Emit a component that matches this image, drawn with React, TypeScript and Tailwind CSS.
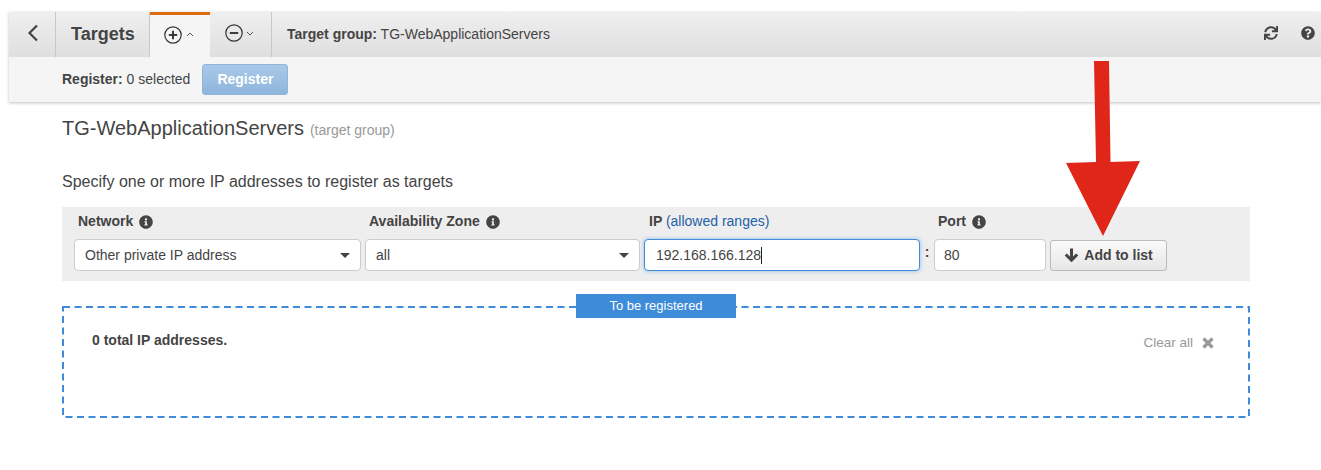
import { FaInfoCircle, FaQuestionCircle, FaSync } from 'react-icons/fa';

function Tab({ className, children }: { className: string; children: React.ReactNode }) {
  return <div className={`flex h-full items-center border-r border-[#c8c8c8] ${className}`}>{children}</div>;
}

function CircleGlyph({ plus }: { plus?: boolean }) {
  return (
    <svg width="18" height="18" viewBox="0 0 18 18" fill="none" stroke="#333" strokeWidth="1.2">
      <circle cx="9" cy="9" r="8.2" />
      <path d="M4.8 9h8.4" strokeWidth="1.9" />
      {plus && <path d="M9 4.8v8.4" strokeWidth="1.9" />}
    </svg>
  );
}

function SelectBox({ label, className }: { label: string; className: string }) {
  return (
    <div className={`flex h-[32px] items-center justify-between rounded-[4px] border border-[#ccc] bg-white pl-[10px] pr-[10px] ${className}`}>
      <span>{label}</span>
      <span className="h-0 w-0 border-x-[5px] border-t-[5px] border-x-transparent border-t-[#444]" />
    </div>
  );
}

export default function App() {
  return (
    <div className="relative h-[470px] w-[1321px] overflow-hidden bg-white font-['Liberation_Sans',Arial,sans-serif] text-[14px] text-[#444]">
      <div className="ml-[9px] mt-[12px] shadow-[0_1px_3px_rgba(0,0,0,0.25)]">
        {/* top toolbar */}
        <div className="flex h-[45px] items-center bg-gradient-to-b from-[#efefef] to-[#dfdfdf]">
          <Tab className="w-[47px] justify-center">
            <svg className="mb-[3px] ml-[2px]" width="14" height="18" viewBox="0 0 14 18" fill="none" stroke="#444" strokeWidth="2.2">
              <path d="M11 1.5 3.5 9l7.5 7.5" />
            </svg>
          </Tab>
          <Tab className="ml-[3px] w-[91px] pl-[12px]">
            <span className="text-[18px] font-bold">Targets</span>
          </Tab>
          <div className="flex h-full w-[60px] items-center gap-[4px] border-t-[3px] border-[#dd6b10] bg-[#f5f5f5] pb-[3px] pl-[14px]">
            <CircleGlyph plus />
            <svg width="8" height="5" viewBox="0 0 8 5" fill="none" stroke="#555"><path d="m1 4 3-3 3 3" /></svg>
          </div>
          <Tab className="ml-[4px] w-[58px] gap-[3px] pb-[3px] pl-[11px]">
            <CircleGlyph />
            <svg width="8" height="5" viewBox="0 0 8 5" fill="none" stroke="#555"><path d="m1 1 3 3 3-3" /></svg>
          </Tab>
          <div className="ml-[15px] text-[14px]">
            <span className="font-bold">Target group:</span> TG-WebApplicationServers
          </div>
          <div className="mb-[3px] ml-auto mr-[6px] flex items-center gap-[23px] text-[14px] text-[#444]">
            <FaSync />
            <FaQuestionCircle />
          </div>
        </div>
        {/* register bar */}
        <div className="flex h-[45px] items-center bg-[#f5f5f5] pl-[53px]">
          <span>
            <span className="font-bold">Register:</span> 0 selected
          </span>
          <button className="ml-[12px] h-[31px] w-[86px] rounded-[3px] border border-[#8fb5da] bg-gradient-to-b from-[#a9c9e8] to-[#8fb5dc] font-bold text-white">
            Register
          </button>
        </div>
      </div>

      <div className="ml-[62px] w-[1188px]">
        <div className="mt-[11px] flex items-baseline gap-[6px]">
          <span className="text-[20px] text-[#444]">TG-WebApplicationServers</span>
          <span className="text-[14px] text-[#999]">(target group)</span>
        </div>
        <p className="mt-[30px] text-[16px] leading-[18px]">Specify one or more IP addresses to register as targets</p>

        {/* form */}
        <div className="mt-[16px] h-[74px] bg-[#eeeeee] pl-[12px] pt-[6px]">
          <div className="flex h-[17px] items-center font-bold">
            <span className="ml-[4px] flex w-[291px] items-center gap-[6px]">Network <FaInfoCircle className="text-[#444]" /></span>
            <span className="flex w-[280px] items-center gap-[6px]">Availability Zone <FaInfoCircle className="text-[#444]" /></span>
            <span className="w-[289px]">IP <span className="font-normal text-[#1f5fa8]">(allowed ranges)</span></span>
            <span className="flex items-center gap-[6px]">Port <FaInfoCircle className="text-[#444]" /></span>
          </div>
          <div className="mt-[9px] flex items-center">
            <SelectBox label="Other private IP address" className="w-[287px]" />
            <SelectBox label="all" className="ml-[4px] w-[275px]" />
            <div className="ml-[4px] flex h-[32px] w-[276px] items-center rounded-[4px] border border-[#3d8bd9] bg-white pl-[11px] shadow-[0_0_4px_rgba(61,139,217,0.5)]">
              192.168.166.128<span className="h-[17px] w-px bg-[#222]" />
            </div>
            <span className="mb-[5px] w-[14px] text-center font-bold">:</span>
            <div className="flex h-[32px] w-[112px] items-center rounded-[4px] border border-[#ccc] bg-white pl-[9px]">80</div>
            <button className="ml-[4px] flex h-[31px] w-[117px] items-center justify-center gap-[5px] rounded-[3px] border border-[#bbb] bg-gradient-to-b from-[#fafafa] to-[#e6e6e6] font-bold">
              <svg width="15" height="14" viewBox="0 0 15 14" fill="none" stroke="#444" strokeWidth="3">
                <path d="M7.5 0.5v11M1.8 6.5l5.7 5.7 5.7-5.7" />
              </svg>
              Add to list
            </button>
          </div>
        </div>

        {/* drop area */}
        <div className="relative mt-[25px] flex h-[112px] items-start justify-between pl-[30px] pr-[36px] pt-[24px]">
          <svg className="absolute inset-0 h-full w-full" fill="none">
            <rect x="1" y="1" width="1186" height="110" stroke="#3d8bd9" strokeWidth="2" strokeDasharray="7 4.5" />
          </svg>
          <div className="absolute left-[514px] top-[-12px] flex h-[24px] w-[160px] items-center justify-center bg-[#3d8bd9] text-[13px] text-white">
            To be registered
          </div>
          <span className="font-bold">0 total IP addresses.</span>
          <span className="mt-[3px] flex items-center gap-[9px] text-[13.5px] text-[#999]">
            Clear all
            <svg width="12" height="12" viewBox="0 0 12 12" stroke="#999" strokeWidth="3.2">
              <path d="M1.5 1.5l9 9M10.5 1.5l-9 9" />
            </svg>
          </span>
        </div>
      </div>

      {/* red annotation arrow */}
      <svg className="absolute left-[1060px] top-[55px]" width="90" height="190" viewBox="1060 55 90 190">
        <polygon points="1094,61 1109,61 1110.5,162 1140,161 1103,236 1066,163 1096,162" fill="#df2619" />
      </svg>
    </div>
  );
}
